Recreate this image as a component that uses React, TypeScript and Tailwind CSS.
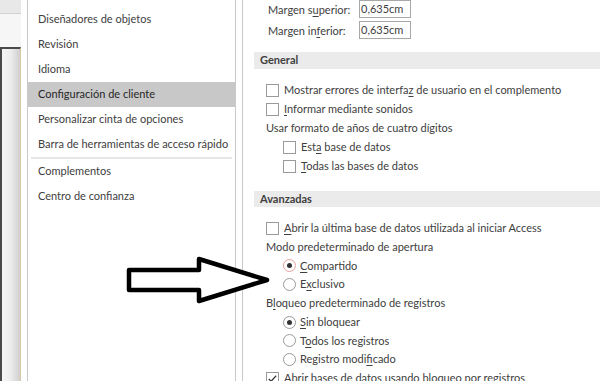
const U = ({ children }: { children: string }) => (
  <span className="underline decoration-1 underline-offset-[2px]">{children}</span>
);

const Checkbox = ({ checked }: { checked?: boolean }) => (
  <span className="w-[13px] h-[13px] border border-[#9a9a9a] bg-white shrink-0 flex items-center justify-center">
    {checked && (
      <svg viewBox="0 0 12 12" className="w-[11px] h-[11px]" fill="none" stroke="#333" strokeWidth={1.3}>
        <path d="M2 6.5l2.5 2.5L10 3" />
      </svg>
    )}
  </span>
);

const Radio = ({ checked, focus }: { checked?: boolean; focus?: boolean }) => (
  <span
    className={
      focus
        ? "w-[13px] h-[13px] rounded-full border border-[#e8a0a0] bg-white shrink-0 flex items-center justify-center"
        : "w-[13px] h-[13px] rounded-full border border-[#9a9a9a] bg-white shrink-0 flex items-center justify-center"
    }
  >
    {checked && <span className="w-[5px] h-[5px] rounded-full bg-[#333]" />}
  </span>
);

const navItems = [
  "Hoja de datos",
  "Diseñadores de objetos",
  "Revisión",
  "Idioma",
  "Configuración de cliente",
  "Personalizar cinta de opciones",
  "Barra de herramientas de acceso rápido",
];

export default function App() {
  return (
    <div className="relative w-[600px] h-[381px] overflow-hidden bg-white flex whitespace-nowrap font-['Lato',sans-serif] text-[11px] text-[#404040]">
      {/* left strip: edge of the window behind */}
      <div className="w-[28px] shrink-0 flex border-r border-[#c9c9c9]">
        <div className="w-[21px] flex flex-col">
          <div className="h-[14px] bg-[#e8e8e8] border-b border-[#d2d2d2]" />
          <div className="h-[33px] bg-[#f6f6f6]" />
          <div className="flex-1 border-t-2 border-l-2 border-[#4a4a4a] border-r border-r-[#d9c7a6] bg-gradient-to-r from-[#f5f5f5] via-[#ececec] to-[#cfcfcf]" />
        </div>
      </div>

      {/* nav */}
      <div className="w-[208px] shrink-0 border-r border-[#c9c9c9] flex flex-col pt-px">
        <div className="-mt-[19px] flex flex-col">
          {navItems.map((t) => (
            <div
              key={t}
              className={
                t === "Configuración de cliente"
                  ? "h-[25px] flex items-center pl-[10px] bg-[#c8c8c8] text-[#262626]"
                  : "h-[25px] flex items-center pl-[10px]"
              }
            >
              {t}
            </div>
          ))}
          <div className="h-[2px] mx-[3px] bg-[#e6e6e6]" />
          <div className="h-[25px] flex items-center pl-[10px]">Complementos</div>
          <div className="h-[25px] flex items-center pl-[10px]">Centro de confianza</div>
        </div>
      </div>

      <div className="w-[6px] shrink-0" />

      {/* content */}
      <div className="flex-1 border-l border-[#c9c9c9] flex flex-col">
        <div className="flex flex-col pl-[25px]">
          <div className="h-[21px] flex items-start">
            <span className="w-[91px] pt-[2px]">
              Margen s<U>u</U>perior:
            </span>
            <span className="w-[52px] h-[18px] border border-[#a8a8a8] px-[1px] leading-[16px]">0,635cm</span>
          </div>
          <div className="h-[21px] flex items-start">
            <span className="w-[91px] pt-[2px]">
              Margen in<U>f</U>erior:
            </span>
            <span className="w-[52px] h-[18px] border border-[#a8a8a8] px-[1px] leading-[16px]">0,635cm</span>
          </div>
        </div>

        <div className="ml-[11px] mt-[10px] h-[20px] bg-[#ebebeb] flex items-center pl-[6px] font-bold">General</div>

        <div className="flex flex-col pl-[23px] pt-[12px]">
          <div className="h-[19px] flex items-center gap-[5px]">
            <Checkbox />
            <span>
              Mostrar errores de interfa<U>z</U> de usuario en el complemento
            </span>
          </div>
          <div className="h-[19px] flex items-center gap-[5px]">
            <Checkbox />
            <span>
              <U>I</U>nformar mediante sonidos
            </span>
          </div>
          <div className="h-[19px] flex items-center">Usar formato de años de cuatro dígitos</div>
          <div className="h-[19px] flex items-center gap-[5px] pl-[17px]">
            <Checkbox />
            <span>
              Est<U>a</U> base de datos
            </span>
          </div>
          <div className="h-[19px] flex items-center gap-[5px] pl-[17px]">
            <Checkbox />
            <span>
              <U>T</U>odas las bases de datos
            </span>
          </div>
        </div>

        <div className="ml-[11px] mt-[15px] h-[20px] bg-[#ebebeb] flex items-center pl-[6px] font-bold">Avanzadas</div>

        <div className="flex flex-col pl-[23px] pt-[12px]">
          <div className="h-[18.75px] flex items-center gap-[5px]">
            <Checkbox />
            <span>
              <U>A</U>brir la última base de datos utilizada al iniciar Access
            </span>
          </div>
          <div className="h-[18.75px] flex items-center">Modo predeterminado de apertura</div>
          <div className="h-[18.75px] flex items-center gap-[4px] pl-[17px]">
            <Radio checked focus />
            <span>
              <U>C</U>ompartido
            </span>
          </div>
          <div className="h-[18.75px] flex items-center gap-[4px] pl-[17px]">
            <Radio />
            <span>
              E<U>x</U>clusivo
            </span>
          </div>
          <div className="h-[18.75px] flex items-center">
            <span>
              B<U>l</U>oqueo predeterminado de registros
            </span>
          </div>
          <div className="h-[18.75px] flex items-center gap-[4px] pl-[17px]">
            <Radio checked />
            <span>
              <U>S</U>in bloquear
            </span>
          </div>
          <div className="h-[18.75px] flex items-center gap-[4px] pl-[17px]">
            <Radio />
            <span>
              T<U>o</U>dos los registros
            </span>
          </div>
          <div className="h-[18.75px] flex items-center gap-[4px] pl-[17px]">
            <Radio />
            <span>
              Registro modi<U>f</U>icado
            </span>
          </div>
          <div className="h-[18.75px] flex items-center gap-[5px]">
            <Checkbox checked />
            <span>
              Abrir bases de datos usando bloqueo por registros
            </span>
          </div>
        </div>
      </div>

      {/* annotation arrow drawn over the screenshot */}
      <svg className="absolute left-0 top-0 pointer-events-none" width="600" height="381" viewBox="0 0 600 381">
        <path
          d="M129 270H199V259L267 280L199 301V290H129Z"
          fill="white"
          stroke="black"
          strokeWidth={4.5}
          strokeLinejoin="round"
        />
      </svg>
    </div>
  );
}
